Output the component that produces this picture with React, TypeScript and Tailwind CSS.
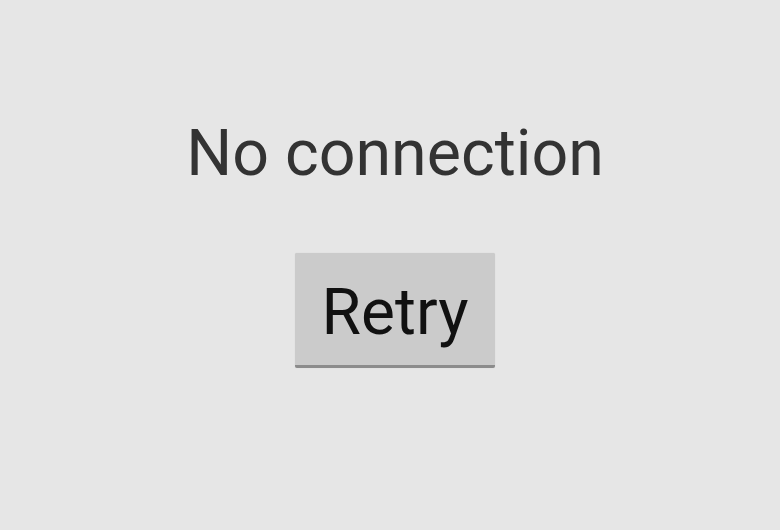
import React from 'react';

export default function App() {
  return (
    <div className="w-[780px] h-[530px] bg-[#e6e6e6] flex flex-col items-center pl-[10px] pt-[121px] font-['Roboto',sans-serif]">
      <h1 className="text-[64.5px] leading-[64px] text-[#333333] font-normal">No connection</h1>
      {/* Holo-style button */}
      <button className="mt-[68px] w-[200px] h-[115px] pt-[8px] bg-[#cbcbcb] border-b-[3px] border-[#8c8c8c] rounded-[2px] shadow-[0_0_1px_rgba(0,0,0,0.15)] flex items-center justify-center text-[64px] leading-[64px] text-[#111111]">
        Retry
      </button>
    </div>
  );
}
